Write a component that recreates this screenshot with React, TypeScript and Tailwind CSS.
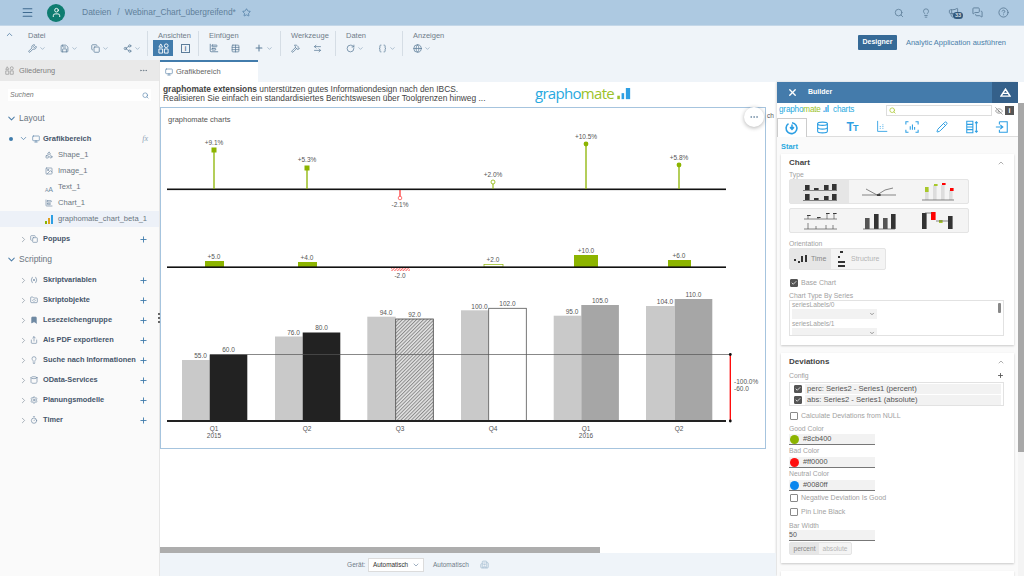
import {
  Braces, ChevronDown, ChevronRight, ChevronUp, CircleHelp, Copy, Database, EyeOff, Globe,
  Image as ImageIcon, Lightbulb, Megaphone, Menu, MessagesSquare, Monitor, MoreHorizontal, Pencil, Plus,
  RotateCw, Save, Search, Share2, Star, Table, Timer, User, Wrench, Bookmark, Share, Shapes, FolderCode, Variable,
  Cylinder, Settings, Building2, Hammer, ArrowLeftRight, ChartBarBig, X, Check,
} from "lucide-react";
import type { ReactNode } from "react";

const pins = [
  { x: 214, top: 150, label: "+9.1%", ly: 145, kind: "square" },
  { x: 307, top: 168, label: "+5.3%", ly: 162, kind: "square" },
  { x: 400, top: 198, label: "-2.1%", ly: 207, kind: "down" },
  { x: 493, top: 182, label: "+2.0%", ly: 177, kind: "ring" },
  { x: 586, top: 144, label: "+10.5%", ly: 139, kind: "dot" },
  { x: 679, top: 165, label: "+5.8%", ly: 160, kind: "dot" },
];

const absBars = [
  { x: 205, w: 19, top: 261, label: "+5.0", ly: 258.5, cx: 214 },
  { x: 298, w: 19, top: 262, label: "+4.0", ly: 259.5, cx: 307 },
  { x: 484, w: 19, top: 264.5, label: "+2.0", ly: 261.5, cx: 493, outline: true },
  { x: 574, w: 24, top: 255, label: "+10.0", ly: 253, cx: 586 },
  { x: 668, w: 23, top: 260, label: "+6.0", ly: 257.5, cx: 679 },
];

const columns = [
  { gx: 182, gt: 360, gl: "55.0", glx: 200.5, gly: 357.5, x: 209.7, t: 354.5, l: "60.0", fill: "#222222" },
  { gx: 275, gt: 336.5, gl: "76.0", glx: 293.5, gly: 334.5, x: 302.7, t: 332.5, l: "80.0", fill: "#222222" },
  { gx: 367.3, gt: 316.7, gl: "94.0", glx: 386, gly: 314.5, x: 395.7, t: 319, l: "92.0", fill: "url(#hatch)", stroke: "#444444" },
  { gx: 461, gt: 310.3, gl: "100.0", glx: 479.5, gly: 308.5, x: 488.7, t: 308.3, l: "102.0", fill: "#ffffff", stroke: "#555555" },
  { gx: 553.7, gt: 315.7, gl: "95.0", glx: 572, gly: 313.5, x: 581.3, t: 305, l: "105.0", fill: "#a6a6a6" },
  { gx: 646, gt: 306, gl: "104.0", glx: 665, gly: 303.5, x: 674.7, t: 299, l: "110.0", fill: "#a6a6a6" },
];

const axisLabels = [
  { x: 214, a: "Q1", b: "2015" },
  { x: 307, a: "Q2" },
  { x: 400, a: "Q3" },
  { x: 493, a: "Q4" },
  { x: 586, a: "Q1", b: "2016" },
  { x: 679, a: "Q2" },
];

function ChartSvg() {
  const t = "fill-[#555555] text-[6.5px]";
  return (
    <svg viewBox="161 108 604 340" className="w-full h-full">
      <defs>
        <pattern id="hatch" width="2.5" height="2.5" patternUnits="userSpaceOnUse" patternTransform="rotate(45)">
          <rect width="2.5" height="2.5" fill="#e4e4e4" />
          <rect width="1" height="2.5" fill="#8a8a8a" />
        </pattern>
        <pattern id="redhatch" width="2" height="2" patternUnits="userSpaceOnUse" patternTransform="rotate(45)">
          <rect width="2" height="2" fill="#ffffff" />
          <rect width="0.8" height="2" fill="#ff5050" />
        </pattern>
      </defs>
      <text x="168" y="122" className="fill-[#555555] text-[7.5px]">graphomate charts</text>

      <rect x="167" y="188.5" width="559" height="1.6" fill="#111111" />
      {pins.map((p) => (
        <g key={p.x}>
          {p.kind === "down" ? (
            <line x1={p.x} x2={p.x} y1="190" y2={p.top} stroke="#ff0000" strokeWidth="1" />
          ) : (
            <line x1={p.x} x2={p.x} y1="189" y2={p.top} stroke="#8cb400" strokeWidth={p.kind === "ring" ? 1 : 1.3} />
          )}
          {p.kind === "square" && <rect x={p.x - 2.5} y={p.top - 2.5} width="5" height="5" fill="#8cb400" />}
          {p.kind === "dot" && <circle cx={p.x} cy={p.top} r="2.4" fill="#8cb400" />}
          {p.kind === "ring" && <circle cx={p.x} cy={p.top} r="2" fill="#ffffff" stroke="#8cb400" strokeWidth="0.8" />}
          {p.kind === "down" && <circle cx={p.x} cy={p.top} r="1.8" fill="#ffffff" stroke="#ff4d4d" strokeWidth="0.8" />}
          <text x={p.x} y={p.ly} textAnchor="middle" className={t}>{p.label}</text>
        </g>
      ))}

      {absBars.map((b) => (
        <g key={b.x}>
          <rect
            x={b.x}
            y={b.top}
            width={b.w}
            height={267 - b.top}
            fill={b.outline ? "#ffffff" : "#8cb400"}
            stroke={b.outline ? "#8cb400" : "none"}
            strokeWidth="0.7"
          />
          <text x={b.cx} y={b.ly} textAnchor="middle" className={t}>{b.label}</text>
        </g>
      ))}
      <rect x="391" y="267" width="19" height="4" fill="url(#redhatch)" />
      <text x="400" y="278" textAnchor="middle" className={t}>-2.0</text>
      <rect x="167" y="266.4" width="559" height="1.6" fill="#111111" />

      {columns.map((c) => (
        <g key={c.gx}>
          <rect x={c.gx} y={c.gt} width={c.x - c.gx} height={421 - c.gt} fill="#c9c9c9" />
          <rect
            x={c.x}
            y={c.t}
            width="37.6"
            height={421 - c.t}
            fill={c.fill}
            stroke={c.stroke ?? "none"}
            strokeWidth="0.8"
          />
          <text x={c.glx} y={c.gly} textAnchor="middle" className={t}>{c.gl}</text>
          <text x={c.x + 18.8} y={c.t - 2.5} textAnchor="middle" className={t}>{c.l}</text>
        </g>
      ))}
      <line x1="210" x2="730" y1="354.5" y2="354.5" stroke="#555555" strokeWidth="0.7" />
      <rect x="167" y="420" width="559" height="2" fill="#222222" />
      <line x1="730.3" x2="730.3" y1="354.5" y2="421" stroke="#ff0000" strokeWidth="1.3" />
      <circle cx="730.3" cy="354.5" r="1.4" fill="#111111" />
      <circle cx="730.3" cy="421" r="1.4" fill="#111111" />
      <text x="734" y="384" className={t}>-100.0%</text>
      <text x="734" y="391" className={t}>-60.0</text>
      {axisLabels.map((a) => (
        <g key={a.x}>
          <text x={a.x} y="431" textAnchor="middle" className={t}>{a.a}</text>
          {a.b && <text x={a.x} y="438" textAnchor="middle" className={t}>{a.b}</text>}
        </g>
      ))}
    </svg>
  );
}

function OutlineIcon({ className }: { className?: string }) {
  return (
    <svg viewBox="0 0 12 12" className={className} fill="none" stroke="currentColor" strokeWidth="1">
      <path d="M3 1 5 4.5H1zM1 6.5h4v4.5H1z" />
      <circle cx="9" cy="3" r="2" />
      <path d="M7 6.5h4v4.5H7z" />
    </svg>
  );
}

function ToolGroup({ label, width, children, last }: { label: string; width: number; children: ReactNode; last?: boolean }) {
  return (
    <div
      style={{ width }}
      className={`flex flex-col shrink-0 pl-[10px] h-[25px] ${last ? "" : "border-r border-[#d5dde5]"}`}
    >
      <span className="text-[7.5px] leading-[9px] text-[#6f7d89]">{label}</span>
      <div className="flex items-center h-[16px]">{children}</div>
    </div>
  );
}

function Tool({ children, chevron, w }: { children: ReactNode; chevron?: boolean; w: number }) {
  return (
    <div style={{ width: w }} className="flex items-center gap-[2px] text-[#5d7d9a] shrink-0">
      {children}
      {chevron && <ChevronDown size={7} className="text-[#7f9bb3]" />}
    </div>
  );
}

function TreeRow({ label, icon, plus }: { label: string; icon: ReactNode; plus?: boolean }) {
  return (
    <div className="h-[20px] flex items-center pl-[19px] pr-[11px] shrink-0">
      <ChevronRight size={9} className="text-[#8e9aa5] shrink-0" />
      <span className="w-[13px] ml-[2px] flex justify-start text-[#6f8aa3] shrink-0">{icon}</span>
      <span className="text-[7.4px] font-bold text-[#46566a] whitespace-nowrap">{label}</span>
      {plus && <Plus size={9} strokeWidth={2.4} className="ml-auto text-[#3f7cac] shrink-0" />}
    </div>
  );
}

function ChildRow({ label, icon, active }: { label: string; icon: ReactNode; active?: boolean }) {
  return (
    <div className={`h-[16px] flex items-center pl-[45px] shrink-0 ${active ? "bg-[#edf1f8]" : ""}`}>
      <span className="w-[13px] text-[#6f8aa3] shrink-0">{icon}</span>
      <span className="text-[7.6px] text-[#6a7580] whitespace-nowrap">{label}</span>
    </div>
  );
}

function Section({ label }: { label: string }) {
  return (
    <div className="h-[20px] flex items-center pl-[6px] shrink-0">
      <ChevronDown size={11} strokeWidth={2.2} className="text-[#4d7ea8]" />
      <span className="ml-[2px] text-[8.5px] text-[#6a7580]">{label}</span>
    </div>
  );
}

function CheckBox({ on }: { on?: boolean }) {
  return (
    <span className={`w-[8px] h-[8px] rounded-[1px] border shrink-0 flex items-center justify-center ${on ? "bg-[#555555] border-[#555555]" : "bg-white border-[#8a8a8a]"}`}>
      {on && <Check size={6} strokeWidth={3} className="text-white" />}
    </span>
  );
}

function ColorRow({ color, value }: { color: string; value: string }) {
  return (
    <div className="h-[10px] w-[86px] flex items-center bg-[#f2f2f2] border-b border-[#777777] box-content">
      <span style={{ backgroundColor: color }} className="w-[9px] h-[9px] rounded-full ml-[1px] shrink-0" />
      <span className="ml-[4px] text-[7.4px] text-[#555555]">{value}</span>
    </div>
  );
}

function Label({ children, h = 9 }: { children: ReactNode; h?: number }) {
  return (
    <div style={{ height: h }} className="text-[6.8px] leading-[9px] text-[#a2a2a2] whitespace-nowrap">
      {children}
    </div>
  );
}

/* kleine Diagramm-Vorschauen in den Typ-Buttons */
function Mini({ bars, line, w = 3.6 }: { bars: [number, number, number, string?][]; line?: string; w?: number }) {
  return (
    <svg viewBox="0 0 36 20" className="w-[36px] h-[20px]">
      {bars.map(([x, y, h, c], i) => (
        <rect key={i} x={x} y={y} width={w} height={h} fill={c ?? "#333333"} />
      ))}
      {line && <path d={line} stroke="#555555" strokeWidth="0.7" fill="none" />}
    </svg>
  );
}

function TypeCell({ children, on, w = 60 }: { children: ReactNode; on?: boolean; w?: number }) {
  return (
    <div style={{ width: w }} className={`flex items-center justify-center h-full ${on ? "bg-[#e6e6e6]" : ""}`}>
      {children}
    </div>
  );
}

function BuilderTabIcon({ children, active }: { children: ReactNode; active?: boolean }) {
  return (
    <div
      className={`w-[30px] h-[18px] flex items-center justify-center text-[#2d9fe3] shrink-0 ${
        active ? "border-x border-t border-[#cccccc] bg-white h-[19px] -mb-px" : ""
      }`}
    >
      {children}
    </div>
  );
}

export default function App() {
  return (
    <div className="w-[1024px] h-[576px] overflow-hidden flex flex-col bg-white font-['Liberation_Sans',sans-serif] relative">
      {/* Shell bar */}
      <header className="h-[26px] shrink-0 bg-[#adc9e1] border-b border-[#c4d7e8] flex items-center text-[#5f7f9a]">
        <Menu size={13} className="ml-[21px] text-[#3f6a8f]" />
        <span className="ml-[13px] w-[18px] h-[18px] rounded-full bg-[#0e7c70] flex items-center justify-center">
          <User size={11} className="text-white" />
        </span>
        <span className="ml-[17px] text-[8.5px]">Dateien</span>
        <span className="ml-[6px] text-[8.5px]">/</span>
        <span className="ml-[5px] text-[8.4px] whitespace-nowrap">Webinar_Chart_übergreifend*</span>
        <Star size={9} className="ml-[6px] text-[#4f7ca3]" />
        <div className="ml-auto flex items-center mr-[15px]">
          <Search size={10} />
          <Lightbulb size={10} className="ml-[17px]" />
          <span className="relative ml-[17px]">
            <Megaphone size={11} />
            <span className="absolute -right-[4px] top-[5px] h-[7px] w-[10px] rounded-full bg-[#33597c] text-white text-[5.5px] leading-[7px] text-center">33</span>
          </span>
          <MessagesSquare size={11} className="ml-[13px]" />
          <CircleHelp size={11} className="ml-[15px]" />
        </div>
      </header>

      {/* Toolbar */}
      <div className="h-[34px] shrink-0 bg-[#eff4f9] flex items-start pt-[5px] relative">
        <ChevronUp size={9} className="ml-[5px] mt-[-1px] text-[#46749c] shrink-0" />
        <div className="w-[4px] shrink-0" />
        <ToolGroup label="Datei" width={130}>
          <Tool w={32} chevron><Wrench size={9} /></Tool>
          <Tool w={31} chevron><Save size={9} /></Tool>
          <Tool w={32} chevron><Copy size={9} /></Tool>
          <Tool w={22} chevron><Share2 size={9} /></Tool>
        </ToolGroup>
        <ToolGroup label="Ansichten" width={51}>
          <div className="w-[20px] h-[16px] bg-[#427cac] flex items-center justify-center -ml-[5px]">
            <OutlineIcon className="w-[11px] h-[11px] text-white" />
          </div>
          <div className="ml-[8px] w-[9px] h-[9px] border border-[#5d7d9a] text-[#5d7d9a] text-[7px] leading-[7px] font-bold text-center">i</div>
        </ToolGroup>
        <ToolGroup label="Einfügen" width={82}>
          <Tool w={22}><ChartBarBig size={10} /></Tool>
          <Tool w={23}><Table size={9} /></Tool>
          <Tool w={20} chevron><Plus size={10} strokeWidth={2.5} /></Tool>
        </ToolGroup>
        <ToolGroup label="Werkzeuge" width={55}>
          <Tool w={22}><Hammer size={9} /></Tool>
          <Tool w={20}><ArrowLeftRight size={9} /></Tool>
        </ToolGroup>
        <ToolGroup label="Daten" width={67}>
          <Tool w={32} chevron><RotateCw size={9} /></Tool>
          <Tool w={22} chevron><Braces size={9} /></Tool>
        </ToolGroup>
        <ToolGroup label="Anzeigen" width={60} last>
          <Tool w={22} chevron><Globe size={9} /></Tool>
        </ToolGroup>
        <div className="ml-auto mr-[18px] flex items-center mt-[4px]">
          <span className="h-[15px] w-[39px] bg-[#366a97] rounded-[1px] text-white text-[7px] font-bold flex items-center justify-center">Designer</span>
          <span className="ml-[9px] text-[7.5px] text-[#4a7fa9] whitespace-nowrap">Analytic Application ausführen</span>
        </div>
      </div>

      <div className="flex-1 flex min-h-0">
        {/* Outline */}
        <aside className="w-[160px] shrink-0 bg-[#fafafa] border-r border-[#e6e6e6] flex flex-col">
          <div className="h-[21px] bg-[#e9e9e9] flex items-center pl-[5px] pr-[11px] shrink-0">
            <OutlineIcon className="w-[9px] h-[9px] text-[#9a9a9a]" />
            <span className="ml-[5px] text-[7.4px] text-[#808080]">Gliederung</span>
            <MoreHorizontal size={9} className="ml-auto text-[#6f7d89]" />
          </div>
          <div className="mx-[8px] mt-[8px] h-[12px] bg-white flex items-center justify-between px-[2px] shrink-0">
            <span className="text-[7px] italic text-[#777777]">Suchen</span>
            <Search size={7} className="text-[#4d7ea8]" />
          </div>
          <div className="h-[7px] shrink-0" />
          <Section label="Layout" />
          <div className="h-[17px] flex items-center pl-[9px] pr-[11px] mt-[2px] shrink-0">
            <span className="w-[4px] h-[4px] rounded-full bg-[#3f7cac]" />
            <ChevronDown size={9} className="ml-[6px] text-[#4d7ea8]" />
            <Monitor size={8} className="ml-[4px] text-[#5f87ab]" />
            <span className="ml-[3px] text-[7.5px] font-bold text-[#46566a]">Grafikbereich</span>
            <span className="ml-auto font-['Liberation_Serif'] italic text-[8px] text-[#8ea4b8]">fx</span>
          </div>
          <ChildRow label="Shape_1" icon={<Shapes size={8} />} />
          <ChildRow label="Image_1" icon={<ImageIcon size={8} />} />
          <ChildRow label="Text_1" icon={<span className="text-[7px] leading-none"><span className="text-[5px]">A</span>A</span>} />
          <ChildRow label="Chart_1" icon={<ChartBarBig size={8} />} />
          <ChildRow
            active
            label="graphomate_chart_beta_1"
            icon={
              <svg viewBox="0 0 9 9" className="w-[9px] h-[9px]">
                <rect x="0" y="6" width="2" height="3" fill="#8cb400" />
                <rect x="3" y="3" width="2" height="6" fill="#e0a020" />
                <rect x="6" y="0" width="2" height="9" fill="#2d9fe3" />
              </svg>
            }
          />
          <div className="h-[2px] shrink-0" />
          <TreeRow label="Popups" icon={<Copy size={8} />} plus />
          <Section label="Scripting" />
          <div className="h-px shrink-0" />
          <TreeRow label="Skriptvariablen" icon={<Variable size={8} />} plus />
          <TreeRow label="Skriptobjekte" icon={<FolderCode size={8} />} plus />
          <TreeRow label="Lesezeichengruppe" icon={<Bookmark size={8} fill="currentColor" />} plus />
          <TreeRow label="Als PDF exportieren" icon={<Share size={8} />} plus />
          <TreeRow label="Suche nach Informationen" icon={<Lightbulb size={8} />} plus />
          <TreeRow label="OData-Services" icon={<Cylinder size={8} />} plus />
          <TreeRow label="Planungsmodelle" icon={<Settings size={8} />} plus />
          <TreeRow label="Timer" icon={<Timer size={8} />} plus />
        </aside>

        {/* Canvas */}
        <main className="w-[616px] shrink-0 flex flex-col relative">
          <div className="h-[22px] bg-[#eff4f9] shrink-0">
            <div className="w-[98px] h-[22px] bg-white border-t-2 border-[#427cac] flex items-center pl-[5px]">
              <Monitor size={8} className="text-[#5f87ab]" />
              <span className="ml-[3px] text-[7.5px] text-[#666666]">Grafikbereich</span>
            </div>
          </div>
          <div className="h-[25px] flex shrink-0 pl-[3px] pt-[3px]">
            <p className="w-[372px] text-[8.4px] leading-[9.4px] text-[#444444] whitespace-nowrap">
              <b>graphomate extensions</b> unterstützen gutes Informationdesign nach den IBCS.
              <br />
              Realisieren Sie einfach ein standardisiertes Berichtswesen über Toolgrenzen hinweg ...
            </p>
            <div className="flex items-center h-[19px] -mt-[1px]">
              <span className="text-[15px] font-['Open_Sans'] tracking-[-0.7px] text-[#29a9e0]">
                grapho<span className="text-[#9cc22a]">mate</span>
              </span>
              <svg viewBox="0 0 18 14" className="w-[16px] h-[12px] ml-[3px]">
                <rect x="0" y="9" width="3" height="4" fill="#9cc22a" />
                <rect x="5" y="6" width="3" height="7" fill="#2d9fe3" />
                <rect x="10" y="0" width="5" height="13" fill="#2d9fe3" />
              </svg>
            </div>
          </div>
          <div className="w-[606px] h-[342px] border border-[#a6c4de] shrink-0 box-border">
            <ChartSvg />
          </div>
          <span className="absolute left-[607px] top-[51px] text-[6.5px] text-[#555555]">ch</span>
          <span className="absolute left-[584px] top-[47px] w-[20px] h-[20px] rounded-full bg-white shadow-[0_1px_4px_rgba(0,0,0,0.3)] flex items-center justify-center">
            <MoreHorizontal size={10} className="text-[#6f8aa3]" />
          </span>
          <span className="absolute left-[-2px] top-[253px] w-[2px] h-[10px] border-l-2 border-dotted border-[#666666]" />
          <div className="flex-1" />
          <div className="h-[6px] w-[440px] bg-[#adadad] shrink-0" />
          <div className="h-[23px] bg-[#eff4f9] shrink-0 flex items-center pl-[187px]">
            <span className="text-[6.6px] w-[21px] text-[#6f7d89]">Gerät:</span>
            <div className="w-[56px] h-[14px] bg-white border border-[#dcdcdc] flex items-center justify-between pl-[4px] pr-[3px]">
              <span className="text-[6.4px] text-[#333333]">Automatisch</span>
              <ChevronDown size={8} className="text-[#6f8aa3]" />
            </div>
            <span className="ml-[9px] text-[6.5px] text-[#6f7d89]">Automatisch</span>
            <Building2 size={9} className="ml-[11px] text-[#a5bdd2]" />
          </div>
        </main>

        {/* Builder */}
        <div className="w-[248px] shrink-0 flex flex-col">
          <div className="h-[22px] bg-[#eff4f9] shrink-0" />
          <div className="flex-1 flex min-h-0">
            <section className="w-[241px] ml-px shrink-0 flex flex-col bg-[#fafafa] shadow-[-1px_0_2px_rgba(0,0,0,0.15)]">
              <div className="h-[21px] bg-[#447bab] flex items-center shrink-0 text-white">
                <X size={11} strokeWidth={3} className="ml-[10px]" />
                <span className="ml-[10px] text-[7px] font-bold">Builder</span>
                <div className="ml-auto w-[26px] h-full bg-[#34608a] flex items-center justify-center">
                  <svg viewBox="0 0 12 10" className="w-[11px] h-[9px]" fill="none" stroke="currentColor" strokeWidth="1.6">
                    <path d="M6 1.2 1 9h10zM3.5 6h5" />
                  </svg>
                </div>
              </div>
              <div className="h-[15px] bg-white flex items-center shrink-0 pl-[2px]">
                <span className="w-[107px] shrink-0 text-[8.2px] text-[#29a9e0] tracking-[-0.2px] whitespace-nowrap">
                  grapho<span className="text-[#9cc22a]">mate</span>
                  <span className="mx-[2px] font-bold text-[#2d9fe3]">.ıl</span> charts
                </span>
                <div className="w-[106px] h-[11px] border border-[#dddddd] flex items-center pl-[2px] shrink-0">
                  <Search size={7} strokeWidth={3} className="text-[#b5cf4a]" />
                </div>
                <EyeOff size={8} className="ml-[3px] text-[#777777]" />
                <span className="ml-[2px] w-[9px] h-[9px] bg-[#555555] text-white text-[7px] font-bold leading-[9px] text-center">i</span>
              </div>
              <div className="h-[18px] bg-white border-b border-[#dddddd] flex shrink-0 box-content">
                <BuilderTabIcon active>
                  <svg viewBox="0 0 16 16" className="w-[14px] h-[14px]" fill="none" stroke="currentColor" strokeWidth="1.8">
                    <path d="M4 3a6.2 6.2 0 1 0 4-1" />
                    <path d="M8 4v5M5.8 7 8 9.4 10.2 7" />
                  </svg>
                </BuilderTabIcon>
                <BuilderTabIcon><Database size={13} /></BuilderTabIcon>
                <BuilderTabIcon><span className="text-[12px] font-bold leading-none tracking-[-1px]">T<span className="text-[9px]">T</span></span></BuilderTabIcon>
                <BuilderTabIcon>
                  <svg viewBox="0 0 16 16" className="w-[14px] h-[14px]" fill="none" stroke="currentColor" strokeWidth="1">
                    <path d="M3 1v12h11" />
                    <path d="M6 7v3M9 5v5" strokeDasharray="1 1" />
                  </svg>
                </BuilderTabIcon>
                <BuilderTabIcon>
                  <svg viewBox="0 0 16 16" className="w-[14px] h-[14px]" fill="none" stroke="currentColor" strokeWidth="1.2">
                    <path d="M1 5V2h3M12 2h3v3M1 11v3h3M15 11v3h-3M6 7v4M8.5 5v6M11 8v3" />
                  </svg>
                </BuilderTabIcon>
                <BuilderTabIcon><Pencil size={12} /></BuilderTabIcon>
                <BuilderTabIcon>
                  <svg viewBox="0 0 16 16" className="w-[14px] h-[14px]" fill="none" stroke="currentColor" strokeWidth="1.2">
                    <path d="M2 1.5h7v13H2zM2 5h7M2 8h7M2 11h7M13 2v12M11.5 3.5 13 2l1.5 1.5M11.5 12.5 13 14l1.5-1.5" />
                  </svg>
                </BuilderTabIcon>
                <BuilderTabIcon>
                  <svg viewBox="0 0 16 16" className="w-[14px] h-[14px]" fill="none" stroke="currentColor" strokeWidth="1.2">
                    <path d="M5 2h9v12H5v-3M5 5V2M1 8h8M6 5.5 9 8l-3 2.5" />
                  </svg>
                </BuilderTabIcon>
              </div>
              <div className="h-[17px] pl-[4px] pt-[5px] shrink-0 text-[7.4px] leading-[9px] font-bold text-[#29a9e0]">Start</div>

              {/* Chart card */}
              <div className="mx-[4px] h-[191px] shrink-0 bg-white shadow-[0_1px_2px_rgba(0,0,0,0.2)] pl-[8px] pr-[9px] pt-[3px]">
                <div className="h-[11px] flex items-center justify-between">
                  <span className="text-[8px] font-bold text-[#444444]">Chart</span>
                  <ChevronUp size={8} className="text-[#888888]" />
                </div>
                <div className="mt-[2px]"><Label>Type</Label></div>
                <div className="w-[180px] h-[25px] bg-[#f4f4f4] border border-[#e4e4e4] rounded-[2px] flex">
                  <TypeCell on><Mini w={4.6} bars={[[3, 3, 5], [12, 6, 2], [22, 3, 5], [30, 2, 6], [3, 12, 6], [12, 16, 2], [22, 14, 4], [30, 12, 6]]} line="M1 8.5h34M1 18.5h34" /></TypeCell>
                  <TypeCell><Mini bars={[[16, 12, 2, "#333333"]]} line="M1 13h34M5 7l11 6 8-5 8-2" /></TypeCell>
                  <TypeCell><Mini bars={[[5, 7, 11, "#dddddd"], [13, 3, 15, "#dddddd"], [21, 3, 15, "#dddddd"], [29, 8, 10, "#dddddd"], [5, 5, 5, "#a8c82a"], [14, 2, 2, "#a8c82a"], [22, 1, 2, "#ff0000"], [30, 6, 3, "#ff0000"]]} line="M2 18h32" /></TypeCell>
                </div>
                <div className="mt-[4px] w-[180px] h-[25px] bg-[#f4f4f4] border border-[#e4e4e4] rounded-[2px] flex">
                  <TypeCell><Mini bars={[[5, 4, 1], [15, 6, 1], [24, 2, 1], [31, 2, 1]]} line="M2 8h33M6 4v4M16 6v2M25 2v6M32 2v6M2 18h33M6 12v6M14 15v3M24 14v4M31 14v4" /></TypeCell>
                  <TypeCell><Mini w={4.6} bars={[[4, 7, 11, "#555555"], [13, 3, 15, "#333333"], [22, 7, 11, "#555555"], [30, 3, 15, "#333333"]]} line="M2 18h32" /></TypeCell>
                  <TypeCell><Mini bars={[[2, 2, 16], [3, 2, 16], [28, 5, 13], [29, 5, 13], [11, 1, 8, "#ff0000"], [12, 1, 8, "#ff0000"], [19, 9, 3, "#a8c82a"]]} line="M5 2h7M16 10h12" /></TypeCell>
                </div>
                <div className="mt-[6px]"><Label>Orientation</Label></div>
                <div className="w-[97px] h-[22px] bg-[#f4f4f4] border border-[#e4e4e4] rounded-[2px] flex items-center">
                  <div className="w-[41px] h-full bg-[#e6e6e6] flex items-center pl-[4px] gap-[3px]">
                    <svg viewBox="0 0 14 8" className="w-[14px] h-[8px]"><rect x="0" y="4" width="2" height="2" fill="#333" /><rect x="4" y="6" width="2" height="2" fill="#333" /><rect x="7" y="1" width="2" height="6" fill="#333" /><rect x="11" y="0" width="2" height="7" fill="#333" /></svg>
                    <span className="text-[7px] text-[#888888]">Time</span>
                  </div>
                  <svg viewBox="0 0 8 16" className="w-[8px] h-[16px] ml-[7px]"><rect x="2" y="0" width="3" height="2" fill="#333" /><rect x="0" y="5" width="2" height="2" fill="#333" /><rect x="0" y="10" width="7" height="2" fill="#333" /><rect x="0" y="14" width="7" height="2" fill="#333" /></svg>
                  <span className="ml-[5px] text-[7px] text-[#b5b5b5]">Structure</span>
                </div>
                <div className="mt-[9px] h-[8px] flex items-center pl-[1px] gap-[3px]">
                  <CheckBox on />
                  <span className="text-[7px] text-[#a2a2a2]">Base Chart</span>
                </div>
                <div className="mt-[4px]"><Label>Chart Type By Series</Label></div>
                <div className="relative h-[36px] w-[215px] border border-[#e2e2e2] overflow-hidden pl-[2px]">
                  <div className="text-[6.6px] leading-[8px] text-[#a2a2a2]">seriesLabels/0</div>
                  <div className="w-[85px] h-[10px] bg-[#f2f2f2] flex items-center justify-end pr-[2px]"><ChevronDown size={6} strokeWidth={3} className="text-[#777777]" /></div>
                  <div className="mt-[1px] text-[6.6px] leading-[8px] text-[#a2a2a2]">seriesLabels/1</div>
                  <div className="w-[85px] h-[10px] bg-[#f2f2f2] flex items-center justify-end pr-[2px]"><ChevronDown size={6} strokeWidth={3} className="text-[#777777]" /></div>
                  <span className="absolute right-[2px] top-[2px] w-[3px] h-[10px] bg-[#888888] rounded-[1px]" />
                </div>
              </div>

              {/* Deviations card */}
              <div className="mx-[4px] mt-[8px] h-[210px] shrink-0 bg-white shadow-[0_1px_2px_rgba(0,0,0,0.2)] pl-[8px] pr-[9px] pt-[3px]">
                <div className="h-[11px] flex items-center justify-between">
                  <span className="text-[8px] font-bold text-[#444444]">Deviations</span>
                  <ChevronUp size={8} className="text-[#888888]" />
                </div>
                <div className="mt-[4px] h-[9px] flex items-center justify-between pr-[1px]">
                  <Label>Config</Label>
                  <Plus size={7} strokeWidth={3} className="text-[#555555]" />
                </div>
                <div className="mt-[2px] w-[215px] h-[24px] border border-[#e2e2e2] pl-[4px] pr-[2px] pt-[1px] flex flex-col gap-px">
                  <div className="h-[10px] flex items-center">
                    <CheckBox on />
                    <span className="ml-[3px] pl-[2px] flex-1 h-full flex items-center bg-[#f2f2f2] text-[7.6px] text-[#555555] whitespace-nowrap">perc: Series2 - Series1 (percent)</span>
                  </div>
                  <div className="h-[10px] flex items-center">
                    <CheckBox on />
                    <span className="ml-[3px] pl-[2px] flex-1 h-full flex items-center bg-[#f2f2f2] text-[7.6px] text-[#555555] whitespace-nowrap">abs: Series2 - Series1 (absolute)</span>
                  </div>
                </div>
                <div className="mt-[6px] h-[8px] flex items-center pl-[1px] gap-[3px]">
                  <CheckBox />
                  <span className="text-[7px] text-[#a2a2a2]">Calculate Deviations from NULL</span>
                </div>
                <div className="mt-[4px]"><Label>Good Color</Label></div>
                <div className="mt-[1px]"><ColorRow color="#8cb400" value="#8cb400" /></div>
                <div className="mt-[1px]"><Label h={11}>Bad Color</Label></div>
                <ColorRow color="#ff1010" value="#ff0000" />
                <div className="mt-[1px]"><Label h={11}>Neutral Color</Label></div>
                <ColorRow color="#0a86ee" value="#0080ff" />
                <div className="mt-[3px] h-[8px] flex items-center pl-[1px] gap-[3px]">
                  <CheckBox />
                  <span className="text-[7px] text-[#a2a2a2]">Negative Deviation Is Good</span>
                </div>
                <div className="mt-[6px] h-[8px] flex items-center pl-[1px] gap-[3px]">
                  <CheckBox />
                  <span className="text-[7px] text-[#a2a2a2]">Pin Line Black</span>
                </div>
                <div className="mt-[5px]"><Label>Bar Width</Label></div>
                <div className="h-[10px] w-[86px] bg-[#f2f2f2] border-b border-[#777777] box-content text-[7px] leading-[10px] text-[#555555]">50</div>
                <div className="mt-[1px] w-[63px] h-[13px] bg-[#f4f4f4] border border-[#e4e4e4] rounded-[2px] flex items-center text-[6.6px]">
                  <span className="w-[29px] h-full bg-[#e6e6e6] flex items-center justify-center text-[#888888]">percent</span>
                  <span className="flex-1 text-center text-[#b5b5b5]">absolute</span>
                </div>
              </div>
              <div className="mx-[4px] mt-[8px] flex-1 bg-white shadow-[0_1px_2px_rgba(0,0,0,0.2)]" />
            </section>
            <div className="w-[6px] flex flex-col shrink-0">
              <div className="h-[21px] bg-white shrink-0" />
              <div className="h-[349px] bg-[#a8a8a8] shrink-0" />
              <div className="flex-1 bg-[#f4f4f4]" />
            </div>
          </div>
        </div>
      </div>
    </div>
  );
}
